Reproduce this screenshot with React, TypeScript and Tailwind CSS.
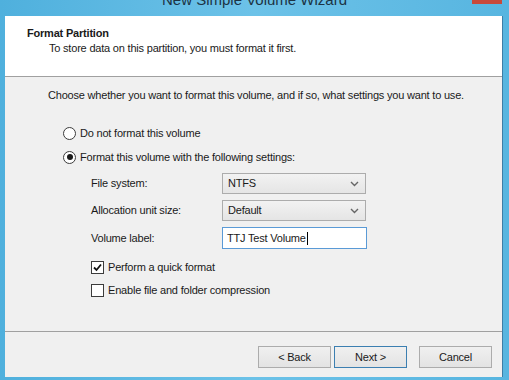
import React from "react";

function Radio({ checked }: { checked?: boolean }) {
  return (
    <span className="flex h-[13px] w-[13px] shrink-0 items-center justify-center rounded-full border border-[#3c3c3c] bg-white">
      {checked && <span className="h-[6px] w-[6px] rounded-full bg-[#1a1a1a]" />}
    </span>
  );
}

function Checkbox({ checked }: { checked?: boolean }) {
  return (
    <span className="flex h-[13px] w-[13px] shrink-0 items-center justify-center border border-[#3c3c3c] bg-white">
      {checked && (
        <svg width="9" height="9" viewBox="0 0 9 9">
          <path d="M1 4.5 L3.5 7 L8 1.5" fill="none" stroke="#111" strokeWidth="1.8" />
        </svg>
      )}
    </span>
  );
}

function Select({ value }: { value: string }) {
  return (
    <div className="flex h-[21px] w-[144px] items-center justify-between border border-[#acacac] bg-gradient-to-b from-[#f2f2f2] to-[#e5e5e5] pl-[5px] pr-[6px]">
      <span>{value}</span>
      <svg width="9" height="6" viewBox="0 0 9 6">
        <path d="M1 1 L4.5 4.5 L8 1" fill="none" stroke="#666" strokeWidth="1.4" />
      </svg>
    </div>
  );
}

function Button({ label, focused }: { label: string; focused?: boolean }) {
  return (
    <div
      className={
        "flex h-[22px] w-[73px] items-center justify-center border bg-gradient-to-b from-[#f0f0f0] to-[#e3e3e3] " +
        (focused ? "border-[#3c7fb1]" : "border-[#acacac]")
      }
    >
      {label}
    </div>
  );
}

export default function App() {
  return (
    <div
      className="flex h-[380px] w-[509px] flex-col overflow-hidden bg-gradient-to-r from-[#4fb0dd] via-[#6cc2e8] to-[#57b5e0] text-[11px] leading-[15px] tracking-[-0.2px] text-[#1a1a1a]"
      style={{ fontFamily: '"Liberation Sans", Arial, sans-serif' }}
    >
      {/* Title bar */}
      <div className="relative h-[16px] shrink-0">
        <div className="mt-[-9px] text-center text-[15px] leading-[18px] tracking-normal text-[#1c3344]">
          New Simple Volume Wizard
        </div>
        <div className="absolute right-[7px] top-0 h-[4px] w-[30px] bg-[#c8493a]" />
      </div>

      <div className="ml-[5px] mr-[6px] flex flex-1 flex-col border-r border-[#3d7ea6] bg-[#f0f0f0]">
        {/* Header */}
        <div className="h-[61px] shrink-0 border-b border-[#a0a0a0] bg-white pl-[22px] pt-[10px]">
          <div className="font-bold">Format Partition</div>
          <div className="pl-[22px]">To store data on this partition, you must format it first.</div>
        </div>

        {/* Body */}
        <div className="flex h-[255px] shrink-0 flex-col border-b border-[#a0a0a0] pl-[43px] pt-[11px]">
          <div className="whitespace-nowrap">
            Choose whether you want to format this volume, and if so, what settings you want to use.
          </div>

          <div className="mt-[22px] flex flex-col gap-[8px] pl-[15px]">
            <label className="flex h-[16px] items-center gap-[4px]">
              <Radio />
              <span>Do not format this volume</span>
            </label>
            <label className="flex h-[16px] items-center gap-[4px]">
              <Radio checked />
              <span>Format this volume with the following settings:</span>
            </label>
          </div>

          <div className="mt-[8px] flex flex-col gap-[6px] pl-[43px]">
            <div className="flex items-center">
              <span className="w-[131px]">File system:</span>
              <Select value="NTFS" />
            </div>
            <div className="flex items-center">
              <span className="w-[131px]">Allocation unit size:</span>
              <Select value="Default" />
            </div>
            <div className="flex items-center">
              <span className="w-[131px]">Volume label:</span>
              <div className="flex h-[22px] w-[145px] items-center border border-[#5a9ad6] bg-white pl-[4px]">
                <span>TTJ Test Volume</span>
                <span className="ml-[1px] h-[13px] w-[1px] bg-black" />
              </div>
            </div>
          </div>

          <div className="mt-[12px] flex flex-col gap-[10px] pl-[43px]">
            <label className="flex h-[13px] items-center gap-[4px]">
              <Checkbox checked />
              <span>Perform a quick format</span>
            </label>
            <label className="flex h-[13px] items-center gap-[4px]">
              <Checkbox />
              <span>Enable file and folder compression</span>
            </label>
          </div>
        </div>

        {/* Footer */}
        <div className="flex justify-end gap-[3px] pr-[10px] pt-[14px]">
          <Button label="< Back" />
          <Button label="Next >" focused />
          <div className="ml-[9px]">
            <Button label="Cancel" />
          </div>
        </div>
      </div>
      <div className="h-[3px] shrink-0" />
    </div>
  );
}
